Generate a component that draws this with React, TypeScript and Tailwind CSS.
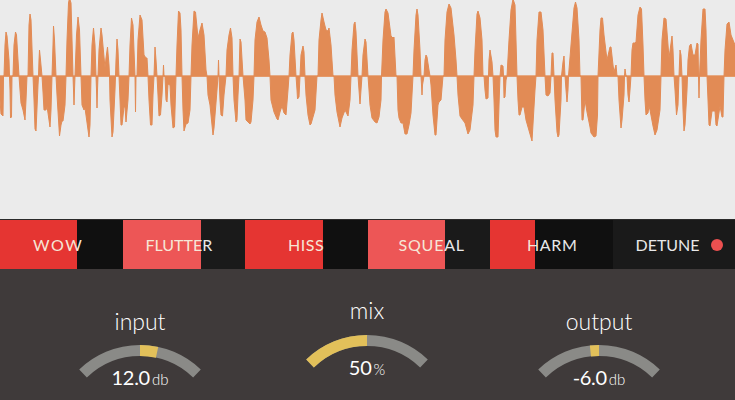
const wave: [number, number][] = [
  [0,76],[0,100],[1,114],[3,116],[3.5,76],[4,76],[5,45],[6,32],[7,36],[9,60],[9.5,76],[10,90],[10.5,118],[11.5,117],[12,76],[13,76],[14,45],[15.5,32],[16.5,35],[18,60],[19,76],[20,90],[21,103],[23,110],[25,120],[26,100],[27,76],[28,76],[29,25],[30,14],[31,20],[33,76],[34,100],[35,129],[36,131],[38,85],[38.5,76],[39,60],[39.5,50],[40.5,60],[42,76],[43,92],[44,110],[46,110],[47,106],[50,127],[51,110],[52,76],[53,45],[53.5,26],[54.5,40],[56,76],[57,95],[59.5,136],[61,125],[62,121],[63,121],[65,105],[66,76],
  [67,40],[68.5,3],[69.5,-2],[71,3],[73,76],[73.5,90],[74,105],[74.5,90],[75,76],[76.5,35],[78,17],[79.5,30],[81,76],[82,105],[84,110],[85,108],[89,137],[90,125],[91,76],[92,45],[93.5,28],[95,45],[96,76],[96.5,90],[97,108],[97.5,90],[98,76],[99,50],[101,28],[102,35],[105,68],[106,58],[107.5,47],[109,65],[109.5,76],[110,100],[112,137],[113,132],[115,90],[115.5,76],[116,60],[117,39],[118,50],[119,76],[120,100],[121,125],[122,125],[124,107],[125,107],[126,122],[128,100],[129,76],[130,45],[131.5,18],[133,25],[135,76],[135.5,112],[136,76],[137,76],[138,40],[140,15],[142,20],[144,55],[146,58],[147,58],[148,76],[149,100],[150.5,125],[152,125],[153,95],[154,76],[155,47],[156,60],[157,76],[158,95],[159,116],[160.5,115],[162,95],[163,76],[163.5,65],[164,76],[165,76],[166,100],[167,102],[168,84],[170,85],[171,105],[173,128],[174.5,127],[176,76],[177,45],[178.5,11],[180,13],[181,30],[182,76],[183,110],[184,131],[186,124],[188,123],[190,110],[191,76],[192,45],[194,11],[195.5,12],[198,38],[200,30],[202,23],[204,35],[206,70],[207,76],[208,95],[210,105],[213,135],[214,128],[217,90],[218,76],[218.5,60],[219,76],[220,100],[221,115],[222.5,116],[224,95],[226,76],[227,50],[229,35],[230.5,28],[232,38],[233,76],[234,100],[236,122],[237,120],[238,95],[239,76],[240,39],[241,42],[243,76],
  [245,100],[246,120],[250,124],[251,122],[253,100],[254,76],[255,40],[257,22],[259,17],[261,25],[263,31],[265,32],[267,38],[269,60],[270,76],[271,100],[274,112],[277,119],[278,120],[280,112],[282,106],[284,113],[286,115],[288,90],[289,76],[290,55],[292,33],[293,32],[294,40],[296,76],[297,90],[297.5,99],[299,97],[300,76],[301,55],[303,46],[304,52],[305,76],[306,95],[308,115],[310,125],[311,124],[315,110],[317,76],[318,76],[319,40],[321,20],[322,13],[324,22],[326,30],[328,31],[329,28],[331,45],[333,76],[334,76],[335,95],[337,112],[340,127],[342,118],[345,110],[346,112],[348,116],[350,100],[351,76],[352,50],[354,24],[355,22],[356,32],[358,76],[359,90],[360,104],[361,90],[362,76],[363,55],[365,39],[366,42],[368,76],[369,90],[370,105],[372,118],[375,122],[377,123],[379,117],[381,100],[381.5,76],[383,40],[385,12],[386,9],[388,13],[391,36],[393,38],[394,37],[396,76],
  [397,76],[398,110],[399,118],[401,123],[403,123],[405,134],[407,134],[409,125],[411,113],[413,76],[414,50],[416,15],[417,9],[418,15],[420,50],[421,76],[421.5,85],[422,95],[422.5,85],[424,76],[425,60],[426,55],[427,57],[429,70],[430,76],[431,85],[433,115],[435,135],[436,135],[438,105],[439,102],[441,100],[443,76],[444,76],[445,40],[447,12],[449,4],[451,8],[454,35],[456,60],[457,76],[458,95],[460,116],[462,119],[465,123],[468,134],[470,130],[473,105],[474,76],[475,50],[477,14],[478,11],[480,18],[482,40],[483,76],[484,76],[485,90],[486,99],[488,98],[488.5,76],[489,60],[490,50],[492,62],[493,76],
  [494,100],[495,130],[496,137],[498,137],[499,105],[500,76],[501,65],[503,66],[503.5,76],[504,98],[505,97],[506,80],[507,76],[509,40],[511,10],[513,-1],[515,5],[517,76],[518,100],[519,115],[520,115],[522,107],[524,107],[526,120],[532,141],[535,90],[536,76],[537,40],[539,12],[541,12],[543,30],[545,76],[546,95],[548,96],[550,93],[551,76],[552,53],[553,53],[554,76],[555,100],[557,132],[558,137],[559,135],[561,100],[561.5,76],[563,62],[564,56],[565,76],[566,90],[567,102],[568,90],[568.5,76],[571,45],[574,8],[575.5,2],[577,8],[579,40],[580,76],[581,76],[582,120],[583,120],[585,100],[587,112],[590,127],[591,133],[594,137],[596,136],[597.5,115],[598,76],[600,30],[601,18],[602.5,18],[604,35],[607,60],[610,47],[611,47],[613,65],[614,72],[616,65],[617,76],[618,76],[619,100],[621,128],[622,120],[624,95],[624.5,76],[625,69],[626,76],[627,76],[628,95],[629,102],[630,90],[631,76],[632,50],[633,43],[635,43],[636,42],[638,15],[640,7],[641.5,9],[643,45],[644,76],[645,100],[646,115],[648,113],[649,106],[650,110],[653,126],[655,135],[657,130],[660,110],[661,76],[662,40],[664,18],[666,19],[669,58],[672,36],[673,50],[674,76],[675,90],[676.5,115],[678,105],[679,76],[680,50],[681,55],[682,76],[683,110],[684,131],[685,125],[687,90],[687.5,76],[688,60],[689.5,46],[691,44],[693,55],[695,55],[697,43],[698,44],[698.5,76],[699,98],[699.5,76],[701,40],[703,9],[705,9],[706,30],[707,76],[708,100],[709,125],[710,126],[712,111],[715,111],[716,125],[717,126],[720,106],[722,117],[723,117],[724,76],[725,50],[727,24],[729,22],[731,35],[733,40],[735,45],[735,76],
];
const wavePath = "M" + wave.map(([x, y]) => `${x} ${y}`).join("L") + "Z";

function Gauge({ from, to, className }: { from: number; to: number; className: string }) {
  const pt = (d: number) => {
    const r = (d * Math.PI) / 180;
    return `${70 + 82 * Math.sin(r)} ${91 - 82 * Math.cos(r) + 0.5}`;
  };
  return (
    <svg width="140" height="42" viewBox="0 0 140 42" className={`block ${className}`}>
      <path d={`M${pt(-44)}A82 82 0 0 1 ${pt(44)}`} fill="none" stroke="#8a8a87" strokeWidth="11" />
      <path d={`M${pt(from)}A82 82 0 0 1 ${pt(to)}`} fill="none" stroke="#e2c05a" strokeWidth="11" />
    </svg>
  );
}

function Knob({ label, value, unit, from, to, className, gaugeClass }: { label: string; value: string; unit: string; from: number; to: number; className: string; gaugeClass: string }) {
  return (
    <div className={`flex w-[140px] flex-col items-center ${className}`}>
      <div className="h-[31px] text-[23px] leading-[30px] font-light text-white">{label}</div>
      <Gauge from={from} to={to} className={gaugeClass} />
      <div className="-mt-[18px] flex items-baseline text-white">
        <span className="text-[20px] leading-[24px] tracking-[-0.3px]">{value}</span>
        <span className="ml-[2px] text-[15px] leading-[24px] font-light">{unit}</span>
      </div>
    </div>
  );
}

const cream = "text-[#f6e6d6]";

export default function App() {
  return (
    <div className="flex h-[400px] w-[735px] flex-col overflow-hidden bg-[#ebebeb] font-['Lato',sans-serif]">
      <div className="h-[219px] shrink-0">
        <svg width="735" height="219" viewBox="0 0 735 219" className="block">
          <rect x="0" y="75.5" width="735" height="1.5" fill="#e9a77f" />
          <path d={wavePath} fill="#e28b55" stroke="#e28b55" strokeWidth="1" strokeLinejoin="round" />
        </svg>
      </div>
      <div className="flex h-[50px] shrink-0 border-t border-[#2a2a2a] bg-[#101010] text-[16px] leading-[49px] text-[#e8e8e8]">
        <div className="w-[122.5px] bg-[linear-gradient(90deg,#e53532_77px,#101010_77px)] pl-[33px]">
          <span className={`${cream} tracking-[1.6px]`}>WOW</span>
        </div>
        <div className="w-[122.5px] bg-[linear-gradient(90deg,#ed5656_78px,#1a1a1a_78px)] pl-[23px]">
          <span className={cream}>FLUTTE</span>R
        </div>
        <div className="w-[122.5px] bg-[linear-gradient(90deg,#e53532_78px,#101010_78px)] pl-[43px] tracking-[0.5px]">
          <span className={cream}>HISS</span>
        </div>
        <div className="w-[122.5px] bg-[linear-gradient(90deg,#ed5656_77px,#1a1a1a_77px)] pl-[31px] tracking-[0.8px]">
          <span className={cream}>SQUE</span>AL
        </div>
        <div className="w-[122.5px] bg-[linear-gradient(90deg,#e53532_45px,#101010_45px)] pl-[37px] tracking-[0.6px]">
          <span className={cream}>H</span>ARM
        </div>
        <div className="flex flex-1 items-center bg-[#1a1a1a] pl-[23px]">
          DETUNE
          <span className="ml-[11px] h-[12px] w-[12px] rounded-full bg-[#ec5050]" />
        </div>
      </div>
      <div className="flex flex-1 items-start bg-[#3f3a3a] pl-[70px]">
        <Knob label="input" value="12.0" unit="db" from={0} to={12} className="mt-[37px]" gaugeClass="mt-[4px]" />
        <Knob label="mix" value="50" unit="%" from={-44} to={0} className="ml-[87px] mt-[26px]" gaugeClass="mt-[5px]" />
        <Knob label="output" value="-6.0" unit="db" from={-6} to={0} className="ml-[92px] mt-[37px]" gaugeClass="mt-[4px]" />
      </div>
    </div>
  );
}
